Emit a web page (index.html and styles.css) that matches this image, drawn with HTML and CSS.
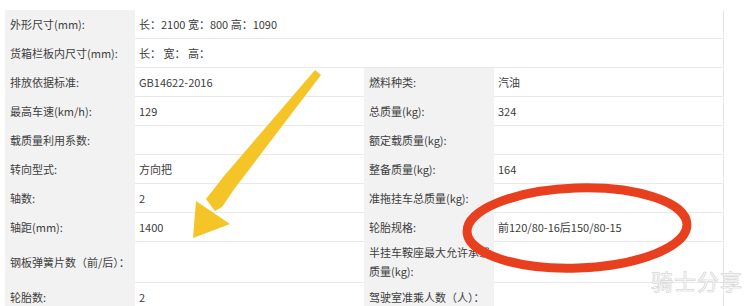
FILE: index.html
```html
<!DOCTYPE html>
<html lang="zh">
<head>
<meta charset="utf-8">
<link rel="stylesheet" href="styles.css">
</head>
<body>
<div class="page">
  <table class="spec">
    <colgroup>
      <col class="c-l1"><col class="c-v1"><col class="c-l2"><col class="c-v2">
    </colgroup>
    <tr><th>外形尺寸(mm):</th><td colspan="3">长：2100 宽：800 高：1090</td></tr>
    <tr><th>货箱栏板内尺寸(mm):</th><td colspan="3">长：&nbsp;宽：&nbsp;高：</td></tr>
    <tr><th>排放依据标准:</th><td>GB14622-2016</td><th>燃料种类:</th><td>汽油</td></tr>
    <tr><th>最高车速(km/h):</th><td>129</td><th>总质量(kg):</th><td>324</td></tr>
    <tr><th>载质量利用系数:</th><td></td><th>额定载质量(kg):</th><td></td></tr>
    <tr><th>转向型式:</th><td>方向把</td><th>整备质量(kg):</th><td>164</td></tr>
    <tr><th>轴数:</th><td>2</td><th>准拖挂车总质量(kg):</th><td></td></tr>
    <tr><th>轴距(mm):</th><td>1400</td><th>轮胎规格:</th><td>前120/80-16后150/80-15</td></tr>
    <tr class="tall"><th>钢板弹簧片数（前/后）：</th><td></td><th class="wrap">半挂车鞍座最大允许承载<br>质量(kg):</th><td></td></tr>
    <tr><th>轮胎数:</th><td>2</td><th>驾驶室准乘人数（人）：</th><td></td></tr>
  </table>

  <svg class="marks" width="750" height="306" viewBox="0 0 750 306">
    <ellipse cx="577" cy="228" rx="110" ry="40" fill="none" stroke="#e8401f" stroke-width="9" transform="rotate(-2 577 228)"/>
    <polygon fill="#f5c527" points="315,70 321,75 235,188 222,207 215,211 206,199 224,176"/>
    <polygon fill="#f5c527" points="193,238 196,201 230,224"/>
  </svg>
  <div class="watermark">骑士分享</div>
</div>
</body>
</html>
```
FILE: styles.css
```css
html, body {
  margin: 0;
  padding: 0;
  background: #ffffff;
}
body {
  font-family: "Noto Sans CJK SC", "Noto Sans", sans-serif;
  font-size: 11px;
  color: #3c3c3c;
  width: 750px;
  height: 306px;
  overflow: hidden;
}
.page {
  position: relative;
  width: 750px;
  height: 306px;
  padding-top: 10px;
  padding-left: 5px;
  box-sizing: border-box;
}
.spec {
  border-collapse: collapse;
  table-layout: fixed;
  width: 718px;
  border-right: 1px solid #e6e6e6;
}
.c-l1 { width: 130px; }
.c-v1 { width: 229px; }
.c-l2 { width: 130px; }
.c-v2 { width: 229px; }
.spec th,
.spec td {
  height: 28px;
  padding: 0 5px 0 4px;
  text-align: left;
  font-weight: normal;
  white-space: nowrap;
  vertical-align: middle;
  line-height: 15px;
  border-bottom: 1px solid #e9e9e9;
}
.spec th {
  background: #f2f2f2;
  color: #404040;
  border-bottom-color: #f2f2f2;
  padding-left: 5px;
}
.spec td {
  background: #ffffff;
}
.spec tr.tall th,
.spec tr.tall td {
  height: 40px;
}
.spec th.wrap {
  line-height: 19px;
}
.marks {
  position: absolute;
  left: 0;
  top: 0;
  pointer-events: none;
}
.watermark {
  position: absolute;
  left: 651px;
  top: 264px;
  font-size: 22px;
  letter-spacing: 1px;
  color: #ffffff;
  -webkit-text-stroke: 0.5px #cfcfcf;
  text-shadow: 0 0 1px #d6d6d6;
}
```
